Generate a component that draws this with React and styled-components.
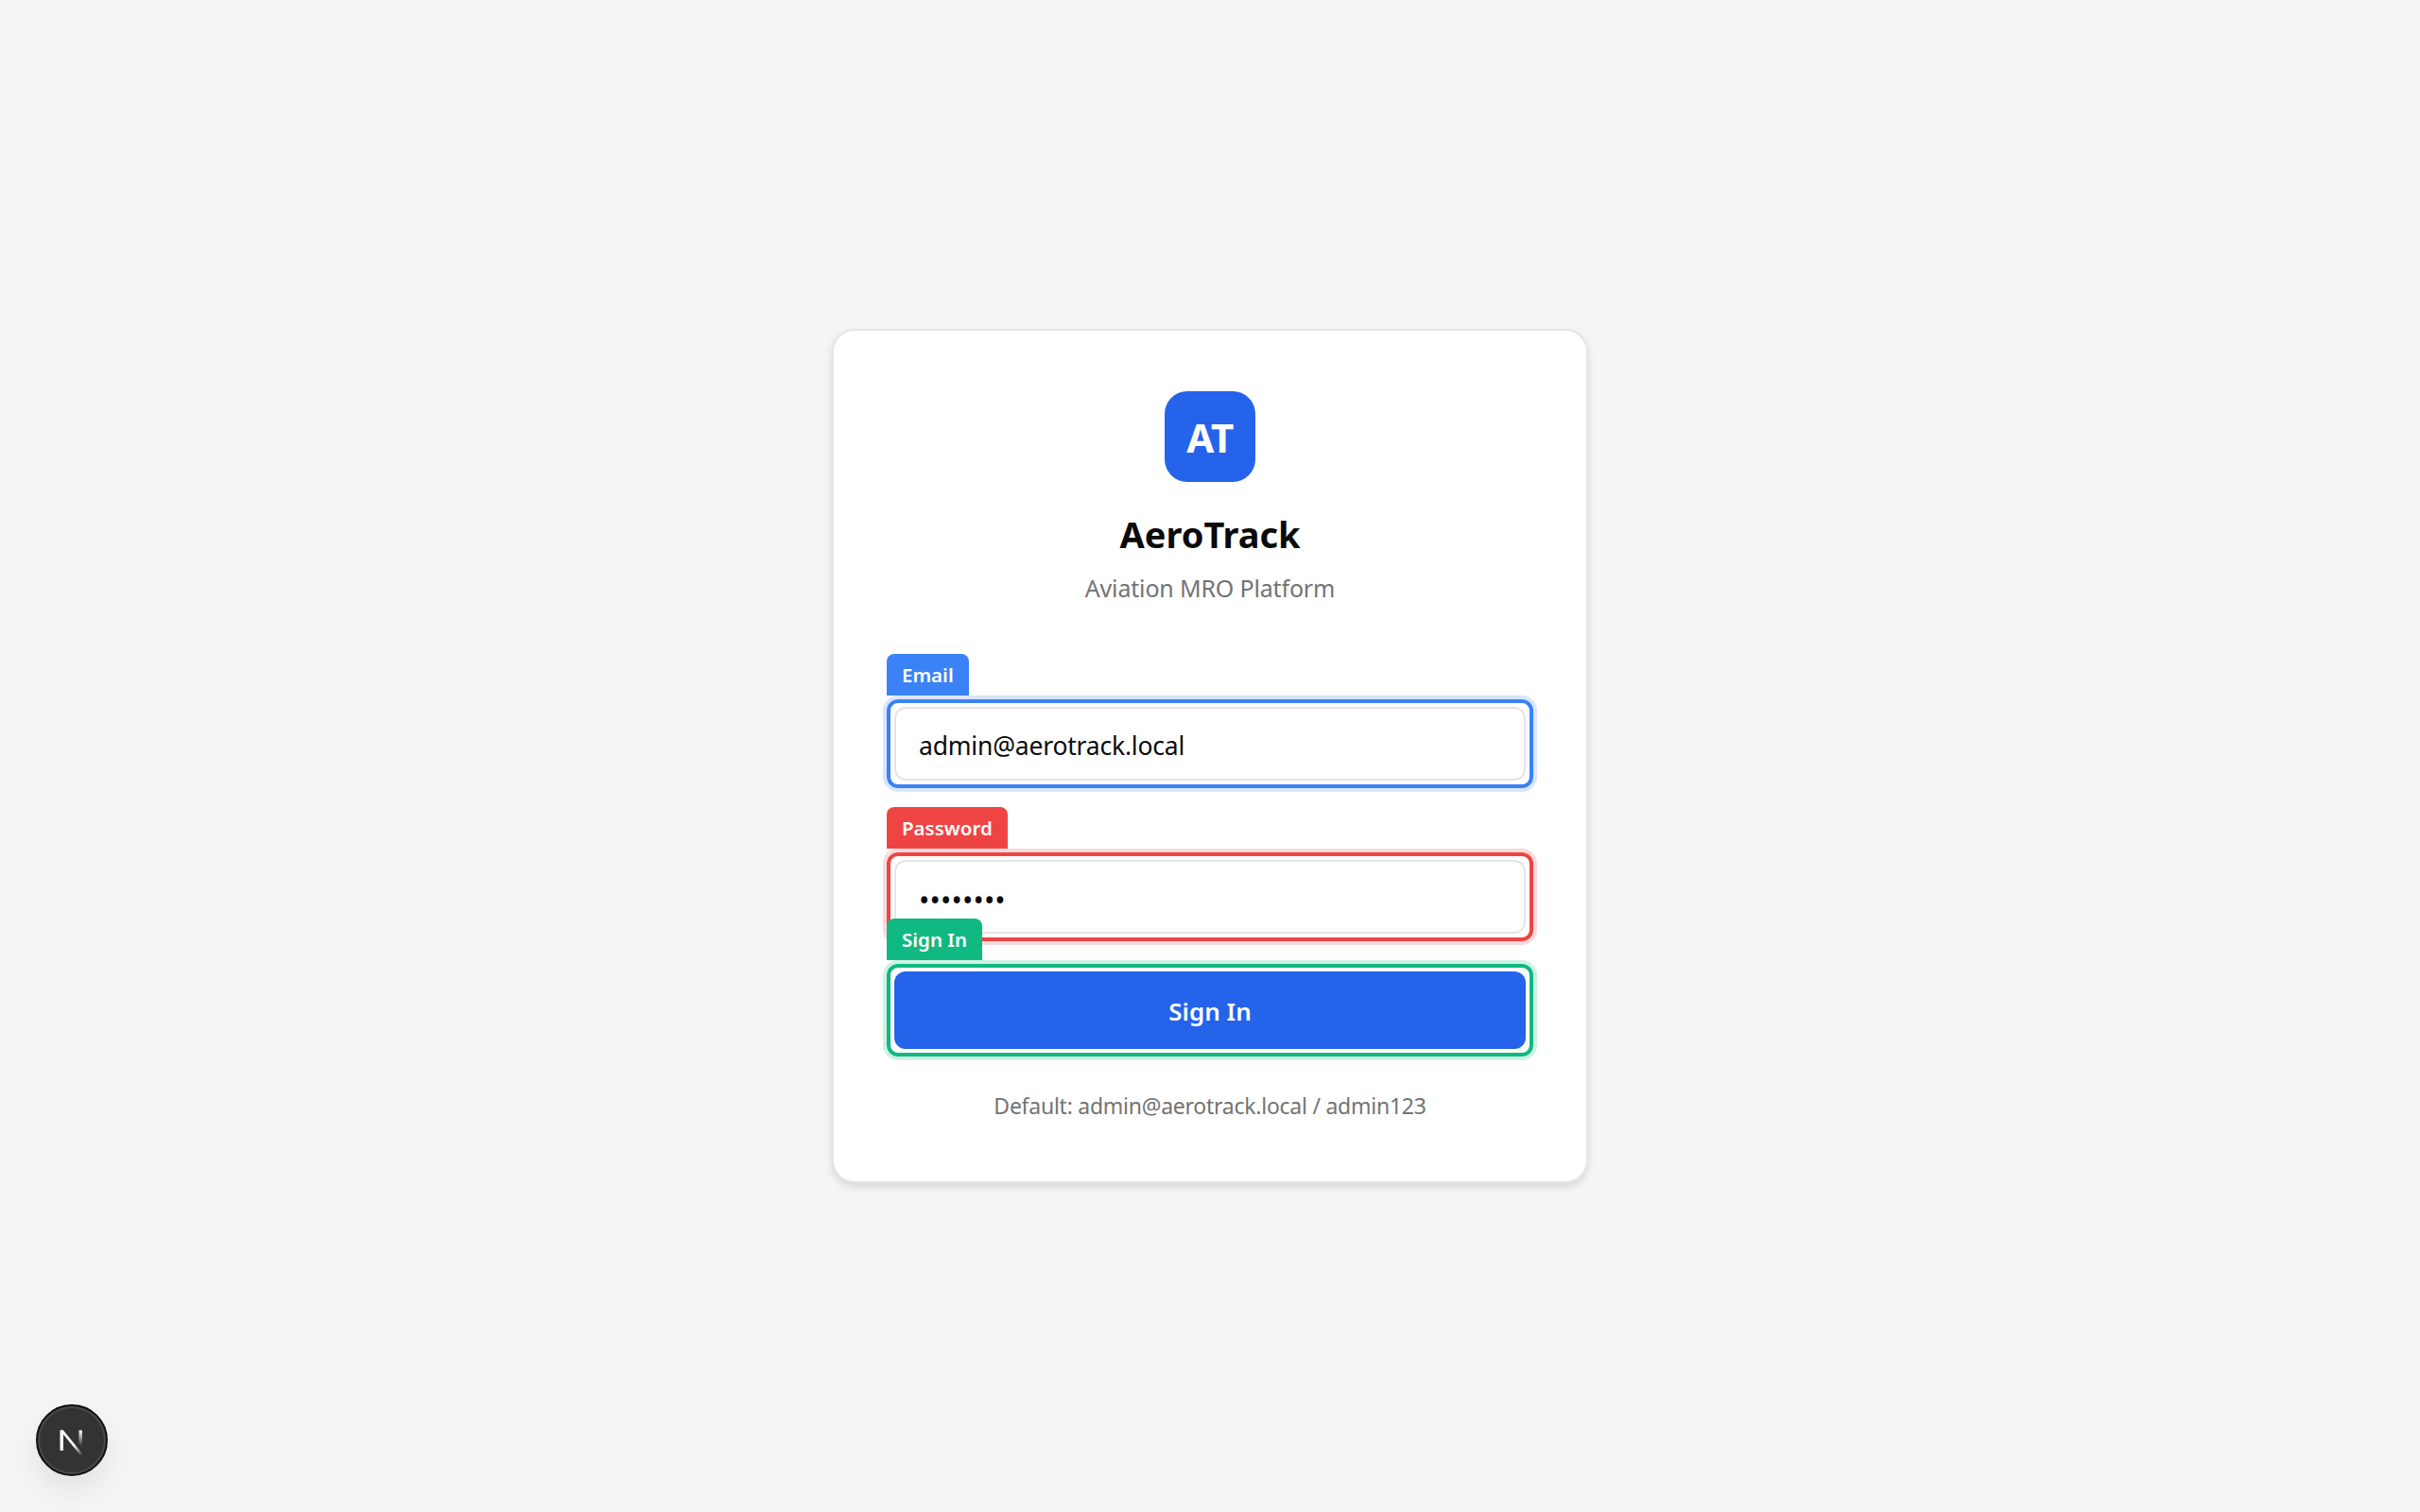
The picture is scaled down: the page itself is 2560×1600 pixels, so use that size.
import React from "react";
import styled, { createGlobalStyle } from "styled-components";

const GlobalStyle = createGlobalStyle`
  * {
    box-sizing: border-box;
  }
  body {
    margin: 0;
    background-color: #f5f5f5;
    font-family: "Noto Sans", "Open Sans", sans-serif;
  }
`;

function NextMark() {
  return (
    <svg width="32" height="32" viewBox="0 0 32 32" fill="none">
      <defs>
        <linearGradient id="fadeDiagonal" x1="5" y1="5.5" x2="27" y2="32" gradientUnits="userSpaceOnUse">
          <stop offset="0.6" stopColor="#fff" />
          <stop offset="1" stopColor="#fff" stopOpacity="0" />
        </linearGradient>
        <linearGradient id="fadeRight" x1="25" y1="5.5" x2="25" y2="22" gradientUnits="userSpaceOnUse">
          <stop stopColor="#fff" />
          <stop offset="1" stopColor="#fff" stopOpacity="0" />
        </linearGradient>
      </defs>
      <path d="M3.5 5.5h3.5V27H3.5z" fill="#fff" />
      <path d="M3.5 5.5H7L28.5 32H25z" fill="url(#fadeDiagonal)" />
      <path d="M23.5 5.5H27V22h-3.5z" fill="url(#fadeRight)" />
    </svg>
  );
}

export default function App() {
  return (
    <>
      <GlobalStyle />
      <Page>
        <Card>
          <Logo>AT</Logo>
          <Title>AeroTrack</Title>
          <Subtitle>Aviation MRO Platform</Subtitle>
          <Form onSubmit={(e) => e.preventDefault()}>
            <Highlighted>
              <Input type="email" defaultValue="admin@aerotrack.local" />
              <Frame color="#3b82f6" halo="rgba(59, 130, 246, 0.2)">
                <Tag color="#3b82f6">Email</Tag>
              </Frame>
            </Highlighted>
            <Highlighted>
              <Input type="password" defaultValue="admin123" masked />
              <Frame color="#ef4444" halo="rgba(239, 68, 68, 0.2)">
                <Tag color="#ef4444">Password</Tag>
              </Frame>
            </Highlighted>
            <ButtonSlot>
              <SubmitButton type="submit">Sign In</SubmitButton>
              <Frame color="#10b981" halo="rgba(16, 185, 129, 0.2)">
                <Tag color="#10b981">Sign In</Tag>
              </Frame>
            </ButtonSlot>
          </Form>
          <Hint>Default: admin@aerotrack.local / admin123</Hint>
        </Card>
        <DevBadge aria-label="Open Next.js Dev Tools">
          <NextMark />
        </DevBadge>
      </Page>
    </>
  );
}

const Page = styled.main`
  min-height: 100vh;
  display: flex;
  align-items: center;
  justify-content: center;
  background-color: #f5f5f5;
`;

const Card = styled.div`
  width: 800px;
  padding: 64px;
  display: flex;
  flex-direction: column;
  align-items: center;
  background-color: #fff;
  border: 2px solid #e5e5e5;
  border-radius: 24px;
  box-shadow: 0 4px 8px rgba(0, 0, 0, 0.12);
`;

const Logo = styled.div`
  width: 96px;
  height: 96px;
  display: flex;
  align-items: center;
  justify-content: center;
  background-color: #2563eb;
  border-radius: 24px;
  color: #fff;
  font-size: 42px;
  letter-spacing: -0.5px;
  font-weight: 700;
`;

const Title = styled.h1`
  margin: 31px 0 0;
  font-size: 38px;
  line-height: 48px;
  font-weight: 700;
  color: #0a0a0a;
`;

const Subtitle = styled.p`
  margin: 13px 0 0;
  font-size: 25px;
  line-height: 40px;
  letter-spacing: -0.17px;
  color: #737373;
`;

const Form = styled.form`
  width: 100%;
  margin-top: 106px;
  display: flex;
  flex-direction: column;
`;

const Highlighted = styled.div`
  position: relative;
  margin-bottom: 84px;

  &:nth-child(2) {
    margin-bottom: 40px;
  }
`;

const ButtonSlot = styled.div`
  position: relative;
`;

const Input = styled.input.withConfig({
  shouldForwardProp: (prop) => prop !== "masked",
})`
  display: block;
  width: 100%;
  height: 78px;
  padding: ${(props) => (props.masked ? "6px 24px 0" : "3px 24px 0")};
  background-color: #fff;
  border: 2px solid #e5e5e5;
  border-radius: 12px;
  outline: none;
  color: #0a0a0a;
  font-family: inherit;
  font-size: ${(props) => (props.masked ? "30px" : "26.5px")};
  letter-spacing: ${(props) => (props.masked ? "0.2px" : "-0.2px")};
`;

const SubmitButton = styled.button`
  display: block;
  width: 100%;
  height: 82px;
  padding: 1px 0 0;
  background-color: #2563eb;
  border: none;
  border-radius: 12px;
  color: #fff;
  font-family: inherit;
  font-size: 26px;
  font-weight: 600;
  cursor: pointer;
`;

const Frame = styled.div`
  position: absolute;
  inset: -8px;
  border: 4px solid ${(props) => props.color};
  border-radius: 12px;
  box-shadow: 0 0 0 4px ${(props) => props.halo};
  pointer-events: none;
`;

const Tag = styled.span`
  position: absolute;
  left: -4px;
  bottom: calc(100% + 8px);
  height: 44px;
  padding: 0 16px;
  display: flex;
  align-items: center;
  background-color: ${(props) => props.color};
  border-radius: 8px 8px 0 0;
  color: #fff;
  font-size: 20.5px;
  font-weight: 600;
  white-space: nowrap;
`;

const Hint = styled.p`
  margin: 44px 0 0;
  font-size: 23px;
  line-height: 32px;
  letter-spacing: -0.25px;
  color: #737373;
`;

const DevBadge = styled.button`
  position: fixed;
  left: 38px;
  bottom: 38px;
  width: 76px;
  height: 76px;
  display: flex;
  align-items: center;
  justify-content: center;
  padding: 0;
  background-color: #333;
  border: 2px solid #111;
  border-radius: 50%;
  box-shadow: inset 0 0 0 2px #4a4a4a, 0 16px 32px rgba(0, 0, 0, 0.08);
`;
